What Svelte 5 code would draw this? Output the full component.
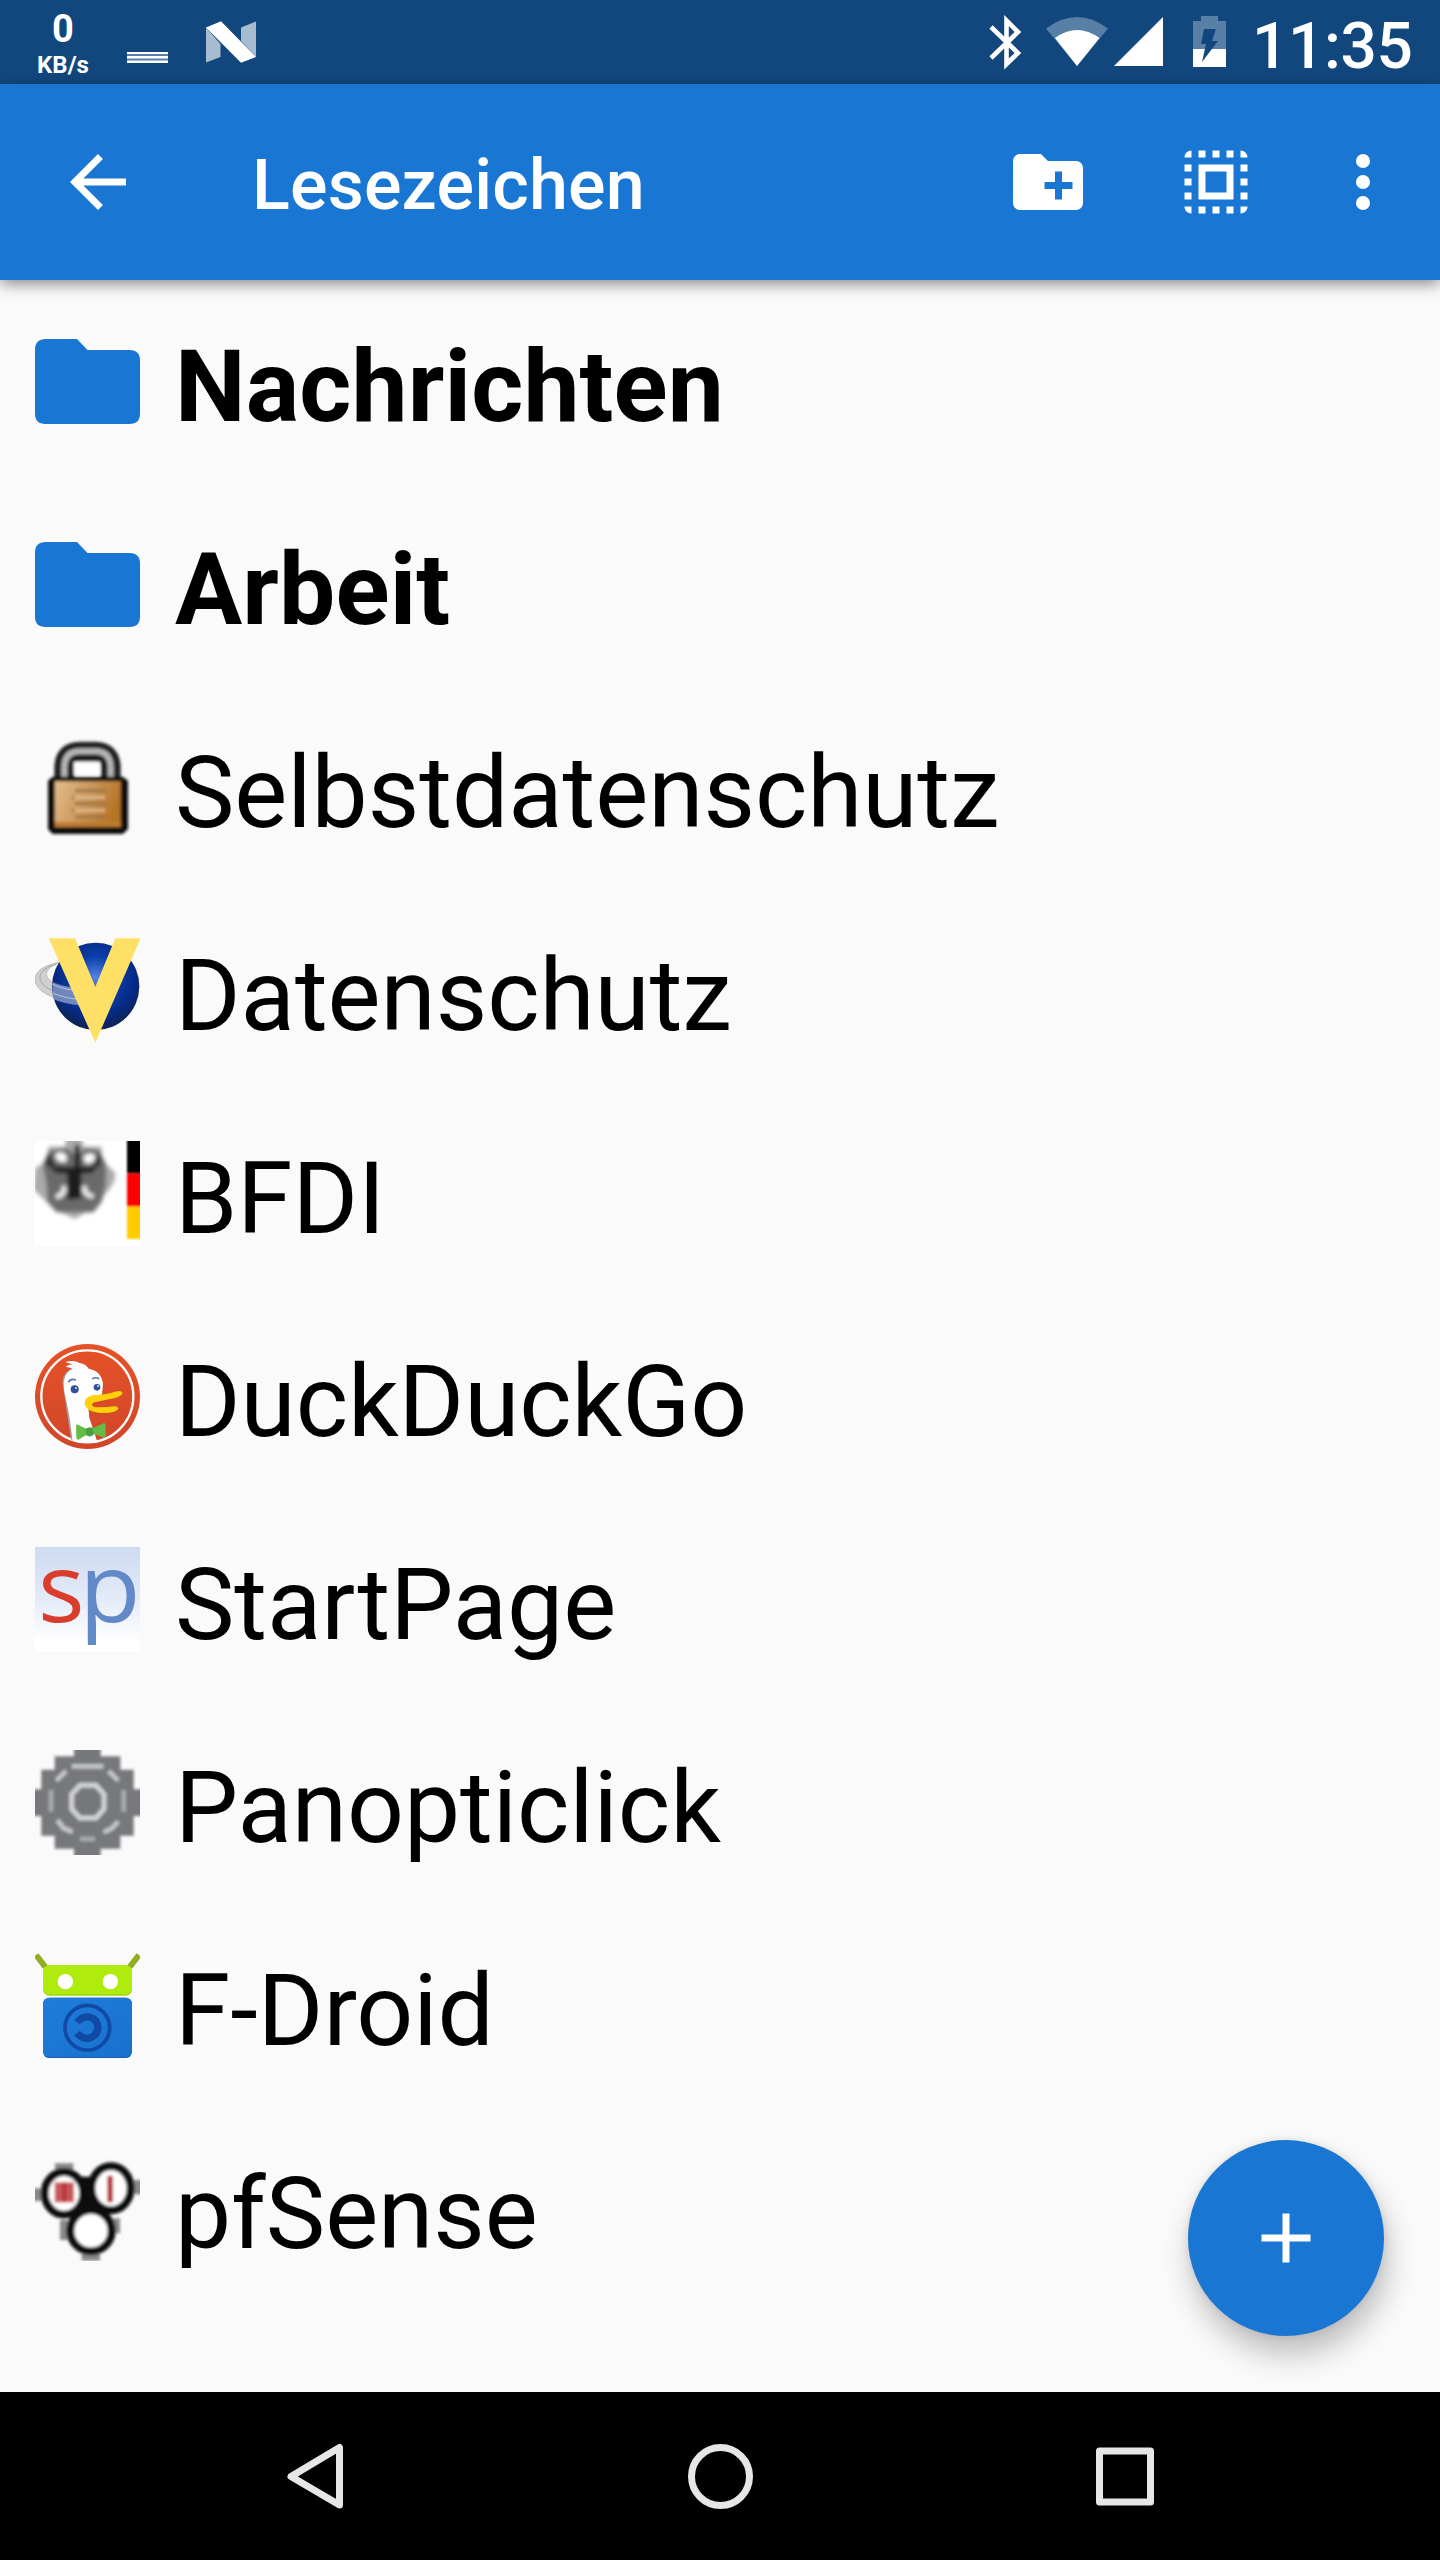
<script>
  const bookmarks = [
    { title: 'Nachrichten', icon: 'folder' },
    { title: 'Arbeit', icon: 'folder' },
    { title: 'Selbstdatenschutz', icon: 'lock' },
    { title: 'Datenschutz', icon: 'globe' },
    { title: 'BFDI', icon: 'eagle' },
    { title: 'DuckDuckGo', icon: 'duck' },
    { title: 'StartPage', icon: 'startpage' },
    { title: 'Panopticlick', icon: 'gear' },
    { title: 'F-Droid', icon: 'fdroid' },
    { title: 'pfSense', icon: 'pfsense' }
  ];
</script>

<div class="screen">
  <header class="status">
    <div class="speed"><span class="num">0</span><span class="unit">KB/s</span></div>
    <svg class="lines" viewBox="0 0 41 84"><path fill="#fff" d="M0 52h41v11H0z" /><path fill="#5a7fa8" d="M0 54h41v2H0zM0 58.500h41v2H0z" /></svg>
    <svg class="nougat" viewBox="0 0 50 84">
      <path fill="#a7bbd1" d="M0 27.500 14.500 44V57L0 62.500zM35 27.500 50 21.500V57L35 41z" />
      <path fill="#fff" d="M0 27.500 15 21.300 50 57 35 62.700z" />
    </svg>
    <div class="grow"></div>
    <svg class="system" viewBox="980 0 250 84">
      <path fill="none" stroke="#fff" stroke-width="4.600" d="m991 27 27 26-11.500 11V20.500L1018 32l-27 26" />
      <path fill="#587fa6" d="M1046 28.500q31-23 62 0L1077 66z" />
      <path fill="#fff" d="M1055 38q22-16 44.500 0L1077 66zM1114 66h49V17z" />
      <path fill="#587fa6" d="M1193 21h8v-5h17v5h8v28h-33z" />
      <path fill="#fff" d="M1193 49h33v18h-33z" />
      <path fill="#12477e" d="M1204 29h12l-4 12h6l-16 21 4-18h-5z" />
    </svg>
    <span class="time">11:35</span>
  </header>

  <div class="appbar">
    <svg class="ic" viewBox="0 0 24 24"><path d="M20 11H7.830l5.590-5.590L12 4l-8 8 8 8 1.410-1.410L7.830 13H20v-2z" /></svg>
    <h1>Lesezeichen</h1>
    <svg class="ic" viewBox="0 0 24 24"><path d="M20 6h-8l-2-2H4c-1.110 0-1.990.890-1.990 2L2 18c0 1.110.890 2 2 2h16c1.110 0 2-.890 2-2V8c0-1.110-.890-2-2-2zm-1 8h-3v3h-2v-3h-3v-2h3V9h2v3h3v2z" /></svg>
    <svg class="ic select" viewBox="0 0 24 24"><path d="M3 5h2V3c-1.100 0-2 .900-2 2zm0 8h2v-2H3v2zm4 8h2v-2H7v2zM3 9h2V7H3v2zm10-6h-2v2h2V3zm6 0v2h2c0-1.100-.900-2-2-2zM5 21v-2H3c0 1.100.900 2 2 2zm-2-4h2v-2H3v2zM9 3H7v2h2V3zm2 18h2v-2h-2v2zm8-8h2v-2h-2v2zm0 8c1.100 0 2-.900 2-2h-2v2zm0-12h2V7h-2v2zm0 8h2v-2h-2v2zm-4 4h2v-2h-2v2zm0-16h2V3h-2v2zM7 17h10V7H7v10zm2-8h6v6H9V9z" /></svg>
    <svg class="ic more" viewBox="0 0 24 24"><circle cx="12" cy="6" r="2" /><circle cx="12" cy="12" r="2" /><circle cx="12" cy="18" r="2" /></svg>
  </div>

  <main>
    {#each bookmarks as b}
      <div class="row" class:bold={b.icon === 'folder'}>
        {#if b.icon === 'folder'}
          <svg class="fav" viewBox="0 0 105 105"><path fill="#1976d2" d="M11 10H42L52.500 21H94.500Q105 21 105 31.500V84.500Q105 95 94.500 95H10.500Q0 95 0 84.500V20.500Q0 10 11 10z" /></svg>
        {:else if b.icon === 'lock'}
          <svg class="fav" viewBox="45 45 315 315">
            <defs>
              <linearGradient id="brass" x1="0" x2="1" y1="0" y2=".3"><stop offset="0" stop-color="#e5bd8c" /><stop offset=".5" stop-color="#cc9a60" /><stop offset="1" stop-color="#b87528" /></linearGradient>
              <filter id="soft" x="-.3" y="-.3" width="1.600" height="1.600"><feGaussianBlur stdDeviation="4" /></filter>
            </defs>
            <g filter="url(#soft)">
              <path fill="none" stroke="#222" stroke-width="60" d="M133 185v-42q0-48 47-48h45q47 0 47 48v42" />
              <path fill="none" stroke="#b4b4b4" stroke-width="18" d="M133 185v-45q2-46 47-46h45q45 0 47 46v45" />
              <path fill="#fff" d="M162 126h78v38h-78z" />
              <path fill="#111" d="M84 182 98 170h210l16 12v146l-16 14H98l-14-14z" />
              <path fill="url(#brass)" d="M105 184h197v136H105z" />
              <path fill="#bd7c30" d="M105 306h197v14H105z" />
              <path fill="none" stroke="#9d7646" stroke-width="8" d="M165 212h95M155 232h8M165 251h95M155 271h8M165 291h95" />
              <path fill="none" stroke="#ddb98b" stroke-width="8" d="M165 232h90M165 271h90" />
            </g>
          </svg>
        {:else if b.icon === 'globe'}
          <svg class="fav" viewBox="45 39 315 315">
            <defs><radialGradient id="sphere" cx=".5" cy=".4" r=".6"><stop offset="0" stop-color="#5683e6" /><stop offset=".4" stop-color="#0b3faa" /><stop offset=".75" stop-color="#042a85" /><stop offset="1" stop-color="#10234f" /></radialGradient></defs>
            <path fill="#d0d0d0" stroke="#aaa" stroke-width="2" d="M120 111Q45 126 45 163q0 50 135 78v-50q-90-5-101-42 0-22 41-38z" />
            <path fill="none" stroke="#8f8f8f" stroke-width="2" d="M110 118Q53 132 60 165q15 38 120 50" />
            <circle cx="227" cy="184" r="131" fill="url(#sphere)" />
            <path fill="#93a5cd" opacity=".75" d="M97 171q35 16 90 19v52q-60-6-88-20z" />
            <path fill="none" stroke="#e0e5f0" stroke-width="2" d="M97 178q40 18 90 20M100 205q35 15 85 19" />
            <path fill="#ffe066" d="M86 40h79l61 145 60-145h76L226 353z" />
          </svg>
        {:else if b.icon === 'eagle'}
          <svg class="fav" viewBox="45 33 315 315">
            <defs><filter id="soft2" x="-.1" y="-.1" width="1.200" height="1.200"><feGaussianBlur stdDeviation="6" /></filter><filter id="soft3" x="-.2" y="-.1" width="1.400" height="1.200"><feGaussianBlur stdDeviation="3" /></filter></defs>
            <path fill="#fff" d="M45 33h315v315H45z" />
            <g filter="url(#soft2)">
              <path fill="#aaa" d="M45 115 85 90V50h50l5-30h45l5 30h55v42l40 35q5 30-25 60l-30 40-65 40-60-28-45-42-20-20z" />
              <path fill="#6a6a6a" d="M88 60 68 105l12 60 2 50 28 32h110l25-32 12-50 2-60-22-45-43-5-22 25-28-25z" />
              <path fill="#2b2b2b" d="m88 70 18 40h112l20-45 5 35-28 30H110l-35-30z" />
              <path fill="#fff" d="M108 70q22-8 32 8l-2 17q-20 5-30-10zM190 80q18-18 36-3l-6 18-22 7z" />
              <path fill="#1b1b1b" d="M105 113h115v16h-36v75l-42 6v-80l-37-2zM164 45h16v70h-16z" />
              <path fill="none" stroke="#f4f4f4" stroke-width="13" d="M130 168q10 22-22 34M196 168q-12 22 24 32" />
            </g>
            <g filter="url(#soft3)"><path d="M321 25h50v106h-50z" /><path fill="red" d="M321 131h50v99h-50z" /><path fill="#fc0" d="M321 230h50v97h-50z" /></g>
          </svg>
        {:else if b.icon === 'duck'}
          <svg class="fav" viewBox="45 42 315 315">
            <defs><linearGradient id="orange" x2="0" y2="1"><stop offset="0" stop-color="#e65227" /><stop offset="1" stop-color="#d0462a" /></linearGradient><clipPath id="disc"><circle cx="202" cy="199" r="140" /></clipPath></defs>
            <circle cx="202.500" cy="199.500" r="157.500" fill="url(#orange)" />
            <circle cx="202" cy="199" r="138" fill="none" stroke="#fff" stroke-width="7" />
            <g clip-path="url(#disc)">
              <path fill="#a5a5a0" d="M127 155q2-30 35-43l10 220h-18q-11-70-27-177z" />
              <path fill="#fff" d="M136 111q12-9 24-7l-24-8q25-8 43 3 20 4 27 17 37 6 43 45l-3 32-42 25 4 45 25 75h-75q-6-70-21-135-18-70 22-86-14-7-23-6z" />
            </g>
            <circle cx="164" cy="178" r="12" fill="#2d5297" /><circle cx="231" cy="172" r="10" fill="#2d5297" />
            <circle cx="168" cy="174" r="3" fill="#d3e0f5" /><circle cx="234" cy="168" r="3" fill="#d3e0f5" />
            <path fill="none" stroke="#5e77b5" stroke-width="5" d="M145 157q7-13 23-7M217 147q9-7 21-1" />
            <path fill="#fdd20a" d="M194 218q2-20 30-23 38-2 60-10 25-6 23 6-7 11-38 16l-50 11q-10 10 11 14l35-1q29-6 30 5-9 14-52 13-50-6-49-31z" />
            <path fill="#65bc46" d="M168 287q3-7 11 0l20 9q9-7 22-3l31-14q6 0 5 11v30q-2 7-10 1l-25-10q-10 13-23 4l-24 14q-6 1-6-7z" />
            <path fill="#43a244" d="M197 297q8-7 20-2l5 17q-11 13-23 3z" />
          </svg>
        {:else if b.icon === 'startpage'}
          <svg class="fav open" viewBox="45 36 315 315">
            <defs><linearGradient id="sky" x2="0" y2="1"><stop offset="0" stop-color="#cfdbf2" /><stop offset=".5" stop-color="#e4ebf8" /><stop offset=".9" stop-color="#fff" /></linearGradient></defs>
            <path fill="url(#sky)" d="M45 36h315v315H45z" />
            <text class="sp" x="54" y="260" textLength="140" lengthAdjust="spacingAndGlyphs" fill="#d93d2b">s</text>
            <text class="sp" x="178" y="260" textLength="184" lengthAdjust="spacingAndGlyphs" fill="#628ac9">p</text>
          </svg>
        {:else if b.icon === 'gear'}
          <svg class="fav" viewBox="45 30 315 315">
            <defs><filter id="soft4" x="-.1" y="-.1" width="1.200" height="1.200"><feGaussianBlur stdDeviation="4.500" /></filter></defs>
            <g filter="url(#soft4)">
              <path fill="#77787b" d="M162 20h80v29h59v40h40v59h30v80h-30v59h-40v39h-59v30h-80v-30h-58v-39H64v-59H35v-80h29V89h40V49h58z" />
              <g fill="none" stroke="#c3c4c6" stroke-width="14">
                <path d="M155 79h95M109 122l29-29M266 93l29 29M112 240l18 24 28 12M295 245l-20 20-24 12" />
                <path stroke="#a9aaac" d="M93 150v65M311 150v65M180 297h45" />
                <path stroke="#d0d1d3" stroke-width="15" d="M180 136h48l24 27v44l-24 27h-48l-25-27v-44z" />
              </g>
            </g>
          </svg>
        {:else if b.icon === 'fdroid'}
          <svg class="fav" viewBox="45 24 315 315">
            <defs><linearGradient id="body" x2="1" y2="1"><stop offset="0" stop-color="#1f7ddb" /><stop offset="1" stop-color="#1871cd" /></linearGradient></defs>
            <path fill="none" stroke="#91ae20" stroke-width="18" d="m48 30 28 36M357 30l-28 36" />
            <rect x="69" y="61" width="267" height="91" rx="19" fill="#a2d90a" />
            <rect x="69" y="61" width="267" height="86" rx="19" fill="#b0eb0e" />
            <circle cx="136" cy="110" r="23" fill="#fff" /><circle cx="271" cy="110" r="23" fill="#fff" />
            <rect x="69" y="158" width="267" height="181" rx="19" fill="#1764b7" />
            <rect x="69" y="158" width="267" height="177" rx="19" fill="url(#body)" />
            <circle cx="202" cy="248" r="67" fill="none" stroke="#104aa5" stroke-width="11" />
            <path fill="none" stroke="#104aa5" stroke-width="22" d="M171 232q15-19 37-16 25 6 26 32-3 26-28 32-21 2-35-16" />
          </svg>
        {:else}
          <svg class="fav" viewBox="45 18 315 315">
            <defs><filter id="soft5" x="-.1" y="-.1" width="1.200" height="1.200"><feGaussianBlur stdDeviation="5" /></filter></defs>
            <g filter="url(#soft5)">
              <path fill="#888" d="M35 115h35v38H35zM330 90h45v43h-45zM105 40h55v20h-55zM185 310h55v22h-55zM275 205h25v45h-25zM120 210h25v60h-25z" />
              <path fill="#0b0b0b" d="M180 80h45l5 100-40 22-20-30z" />
              <g fill="#fff" stroke="#0b0b0b" stroke-width="24">
                <circle cx="213" cy="242" r="62" />
                <ellipse cx="132" cy="130" rx="58" ry="64" />
                <ellipse cx="273" cy="115" rx="59" ry="66" />
              </g>
              <path fill="#c8565a" d="M104 97h58v60h-58z" /><path fill="#b63036" d="M127 97h12v60h-12zM262 77h17v80h-17z" />
            </g>
          </svg>
        {/if}
        <span class="label">{b.title}</span>
      </div>
    {/each}
    <button class="fab" aria-label="+"><svg class="ic" viewBox="0 0 24 24"><path d="M19 13h-6v6h-2v-6H5v-2h6V5h2v6h6v2z" /></svg></button>
  </main>

  <nav>
    <svg viewBox="0 0 84 84"><path d="M66.500 13.500v57.500L18 42.500z" /></svg>
    <svg viewBox="0 0 84 84"><circle cx="42.500" cy="42.500" r="29" /></svg>
    <svg viewBox="0 0 84 84"><path d="M16.500 17h51v51h-51z" /></svg>
  </nav>
</div>

<style>
  :global(body) { margin: 0; }
  .screen { width: 1440px; height: 2560px; display: flex; flex-direction: column; overflow: hidden; background: #fafafa; font-family: Roboto, sans-serif; color: #000; }
  svg { display: block; flex: none; }
  .status { height: 84px; flex: none; display: flex; background: #12477e; color: #fff; }
  .speed { width: 52px; margin-left: 37px; padding-top: 9px; box-sizing: border-box; display: flex; flex-direction: column; align-items: center; font-weight: 700; }
  .num { font-size: 38px; line-height: 41px; }
  .unit { font-size: 24px; line-height: 30px; }
  .lines { width: 41px; height: 84px; margin-left: 38px; }
  .nougat { width: 50px; height: 84px; margin-left: 38px; }
  .grow { flex: 1; }
  .system { width: 250px; height: 84px; }
  .time { font-size: 64px; line-height: 84px; padding-top: 5px; width: 188px; margin-left: 22px; box-sizing: border-box; font-weight: 500; letter-spacing: -.4px; }
  .appbar { height: 196px; flex: none; display: flex; align-items: center; padding: 0 35px 0 56px; box-sizing: border-box; background: #1976d2; color: #fff; box-shadow: 0 4px 14px rgba(0, 0, 0, .45); z-index: 1; }
  .ic { width: 84px; height: 84px; fill: #fff; }
  h1 { margin: 0 0 0 112px; padding-top: 6px; flex: 1; font-size: 70px; line-height: 84px; font-weight: 500; letter-spacing: .2px; }
  .select { margin-left: 84px; }
  .more { margin-left: 63px; }
  main { flex: 1; position: relative; }
  .row { height: 203px; display: flex; align-items: center; padding-left: 35px; }
  .fav { width: 105px; height: 105px; }
  .open { overflow: visible; }
  .label { margin-left: 35px; padding-top: 11px; font-size: 100px; line-height: 120px; letter-spacing: -.05px; }
  .bold { font-weight: 700; }
  .bold .label { letter-spacing: .15px; }
  .sp { font-family: "Open Sans", sans-serif; font-size: 284px; }
  .fab { position: absolute; right: 56px; bottom: 56px; width: 196px; height: 196px; padding: 0; border: 0; border-radius: 50%; display: grid; place-items: center; background: #1976d2; box-shadow: 4px 19px 30px rgba(0, 0, 0, .24), 0 0 8px rgba(0, 0, 0, .1); }
  nav { height: 168px; flex: none; display: flex; justify-content: center; align-items: center; gap: 321px; background: #000; }
  nav svg { width: 84px; height: 84px; fill: none; stroke: #e6e6e6; stroke-width: 7; stroke-linejoin: round; }
</style>
